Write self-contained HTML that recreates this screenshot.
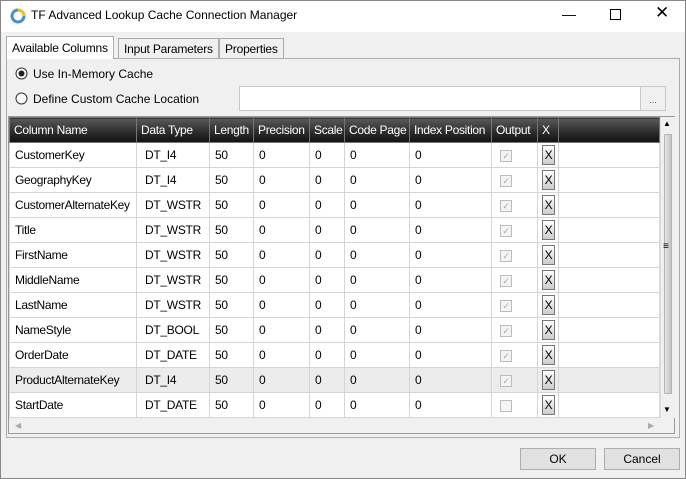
<!DOCTYPE html><html><head><style>
*{box-sizing:border-box}body{margin:0;width:686px;height:479px;overflow:hidden;font-family:"Liberation Sans",sans-serif;font-size:12px;color:#000;background:#f0f0f0;position:relative}
.a{position:absolute}
.title{left:0;top:0;width:686px;height:32px;background:#fff;border:1px solid #888;border-bottom:none}
.tab{top:38px;height:21px;border:1px solid #acacac;background:#f0f0f0;padding:3px 5px;font-size:12px;letter-spacing:-0.2px}
table{border-collapse:collapse;table-layout:fixed;letter-spacing:-0.3px}
td{height:25px;border:1px solid #d5d5d5;padding:0 0 0 5px;background:#fff;white-space:nowrap;overflow:hidden}
th{height:25px;background:linear-gradient(#5a5a5a,#2a2a2a 60%,#111);color:#fff;font-weight:normal;text-align:left;padding:0 0 0 4px;border:1px solid #777;white-space:nowrap;overflow:hidden}
.cb{display:inline-block;width:12px;height:12px;border:1px solid #bcbcbc;background:#f4f4f4;vertical-align:middle;color:#aaa;font-size:9px;line-height:10px;text-align:center}
.x{display:inline-block;width:13px;height:20px;border:1px solid #777;background:linear-gradient(#fff,#ccc);font-size:12px;line-height:18px;text-align:center;vertical-align:middle;margin-left:-1px}
.btn{height:22px;border:1px solid #adadad;background:#e1e1e1;text-align:center;line-height:20px}
</style></head><body>
<div class="a title"></div>
<svg class="a" style="left:10px;top:8px" width="16" height="16"><circle cx="8" cy="8" r="6" fill="none" stroke="#4a90c8" stroke-width="3"/><path d="M8 2a6 6 0 0 1 6 6" stroke="#f0c030" stroke-width="3" fill="none"/></svg>
<div class="a" style="left:31px;top:8px;font-size:12px">TF Advanced Lookup Cache Connection Manager</div>
<div class="a" style="left:562px;top:6px;font-size:14px">&#8212;</div>
<div class="a" style="left:610px;top:9px;width:11px;height:11px;border:1px solid #000"></div>
<div class="a" style="left:655px;top:3px;font-size:17px">&#10005;</div>
<div class="a" style="left:685px;top:0;width:1px;height:479px;background:#888"></div>
<div class="a" style="left:0;top:478px;width:686px;height:1px;background:#888"></div>
<div class="a" style="left:0;top:32px;width:1px;height:447px;background:#888"></div>
<div class="a" style="left:6px;top:58px;width:674px;height:380px;border:1px solid #acacac;background:#f0f0f0"></div>
<div class="a tab" style="left:6px;top:36px;height:23px;background:#fff;border-bottom:none;padding-top:4px">Available Columns</div>
<div class="a tab" style="left:118px">Input Parameters</div>
<div class="a tab" style="left:219px">Properties</div>
<svg class="a" style="left:15px;top:67px" width="13" height="13"><circle cx="6.5" cy="6.5" r="5.5" fill="#fff" stroke="#333"/><circle cx="6.5" cy="6.5" r="3" fill="#222"/></svg>
<div class="a" style="left:33px;top:67px">Use In-Memory Cache</div>
<svg class="a" style="left:15px;top:92px" width="13" height="13"><circle cx="6.5" cy="6.5" r="5.5" fill="#fff" stroke="#333"/></svg>
<div class="a" style="left:33px;top:92px">Define Custom Cache Location</div>
<div class="a" style="left:239px;top:86px;width:402px;height:25px;border:1px solid #c8c8c8;background:#fff"></div>
<div class="a" style="left:640px;top:86px;width:26px;height:25px;border:1px solid #c8c8c8;background:#f0f0f0;text-align:center;font-size:9px;line-height:26px;color:#555">...</div>
<div class="a" style="left:8px;top:116px;width:667px;height:318px;border:1px solid #999;background:#f0f0f0"></div>
<table class="a" style="left:9px;top:117px;width:651px">
<colgroup><col style="width:127px"><col style="width:73px"><col style="width:44px"><col style="width:56px"><col style="width:35px"><col style="width:65px"><col style="width:82px"><col style="width:46px"><col style="width:21px"><col></colgroup>
<tr><th>Column Name</th><th>Data Type</th><th>Length</th><th>Precision</th><th>Scale</th><th>Code Page</th><th>Index Position</th><th>Output</th><th>X</th><th></th></tr>
<tr><td>CustomerKey</td><td>&nbsp;DT_I4</td><td>50</td><td>0</td><td>0</td><td>0</td><td>0</td><td>&nbsp;<span class="cb">✓</span></td><td><span class="x">X</span></td><td></td></tr>
<tr><td>GeographyKey</td><td>&nbsp;DT_I4</td><td>50</td><td>0</td><td>0</td><td>0</td><td>0</td><td>&nbsp;<span class="cb">✓</span></td><td><span class="x">X</span></td><td></td></tr>
<tr><td>CustomerAlternateKey</td><td>&nbsp;DT_WSTR</td><td>50</td><td>0</td><td>0</td><td>0</td><td>0</td><td>&nbsp;<span class="cb">✓</span></td><td><span class="x">X</span></td><td></td></tr>
<tr><td>Title</td><td>&nbsp;DT_WSTR</td><td>50</td><td>0</td><td>0</td><td>0</td><td>0</td><td>&nbsp;<span class="cb">✓</span></td><td><span class="x">X</span></td><td></td></tr>
<tr><td>FirstName</td><td>&nbsp;DT_WSTR</td><td>50</td><td>0</td><td>0</td><td>0</td><td>0</td><td>&nbsp;<span class="cb">✓</span></td><td><span class="x">X</span></td><td></td></tr>
<tr><td>MiddleName</td><td>&nbsp;DT_WSTR</td><td>50</td><td>0</td><td>0</td><td>0</td><td>0</td><td>&nbsp;<span class="cb">✓</span></td><td><span class="x">X</span></td><td></td></tr>
<tr><td>LastName</td><td>&nbsp;DT_WSTR</td><td>50</td><td>0</td><td>0</td><td>0</td><td>0</td><td>&nbsp;<span class="cb">✓</span></td><td><span class="x">X</span></td><td></td></tr>
<tr><td>NameStyle</td><td>&nbsp;DT_BOOL</td><td>50</td><td>0</td><td>0</td><td>0</td><td>0</td><td>&nbsp;<span class="cb">✓</span></td><td><span class="x">X</span></td><td></td></tr>
<tr><td>OrderDate</td><td>&nbsp;DT_DATE</td><td>50</td><td>0</td><td>0</td><td>0</td><td>0</td><td>&nbsp;<span class="cb">✓</span></td><td><span class="x">X</span></td><td></td></tr>
<tr><td style="background:#ececec">ProductAlternateKey</td><td style="background:#ececec">&nbsp;DT_I4</td><td style="background:#ececec">50</td><td style="background:#ececec">0</td><td style="background:#ececec">0</td><td style="background:#ececec">0</td><td style="background:#ececec">0</td><td style="background:#ececec">&nbsp;<span class="cb">✓</span></td><td style="background:#ececec"><span class="x">X</span></td><td style="background:#ececec"></td></tr>
<tr><td>StartDate</td><td>&nbsp;DT_DATE</td><td>50</td><td>0</td><td>0</td><td>0</td><td>0</td><td>&nbsp;<span class="cb"></span></td><td><span class="x">X</span></td><td></td></tr>
</table>
<div class="a" style="left:9px;top:418px;width:651px;height:15px;background:#f0f0f0"></div>
<div class="a" style="left:15px;top:421px;font-size:8px;color:#aaa">◀</div>
<div class="a" style="left:648px;top:421px;font-size:8px;color:#aaa">▶</div>
<div class="a" style="left:660px;top:117px;width:15px;height:301px;background:#f0f0f0;border-left:1px solid #ddd"></div>
<div class="a" style="left:663px;top:119px;font-size:8px">▲</div>
<div class="a" style="left:663px;top:405px;font-size:8px">▼</div>
<div class="a" style="left:664px;top:134px;width:8px;height:260px;background:linear-gradient(90deg,#e4e4e4,#c4c4c4);border:1px solid #b4b4b4"></div>
<div class="a" style="left:663px;top:241px;font-size:10px">≡</div>
<div class="a btn" style="left:520px;top:448px;width:76px">OK</div>
<div class="a btn" style="left:604px;top:448px;width:76px">Cancel</div>
</body></html>
